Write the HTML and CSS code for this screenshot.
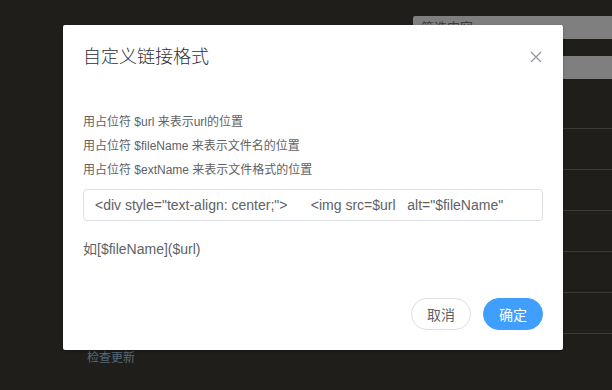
FILE: index.html
```html
<!DOCTYPE html>
<html lang="zh-CN">
<head>
    <meta charset="UTF-8">
    <meta name="viewport" content="width=device-width, initial-scale=1.0">
    <title>自定义链接格式</title>
    <link rel="stylesheet" href="styles.css">
</head>
<body>

    <!-- Page behind the dialog (dimmed) -->
    <div class="page">
        <div class="filters">
            <div class="filter-bar">筛选内容</div>
            <div class="filter-bar"></div>
        </div>
        <div class="rows">
            <div class="row"></div>
            <div class="row"></div>
            <div class="row"></div>
            <div class="row"></div>
            <div class="row"></div>
            <div class="row"></div>
        </div>
        <a href="#" class="update-link">检查更新</a>
    </div>

    <!-- Dialog -->
    <div class="dialog-wrapper">
        <div class="dialog">
            <div class="dialog-header">
                <span class="dialog-title">自定义链接格式</span>
                <button class="dialog-close" aria-label="Close">
                    <svg width="12" height="12" viewBox="0 0 12 12">
                        <path d="M1 1 L11 11 M11 1 L1 11" stroke="#909399" stroke-width="1.2" fill="none"/>
                    </svg>
                </button>
            </div>
            <div class="dialog-body">
                <div class="tip">用占位符 $url 来表示url的位置</div>
                <div class="tip">用占位符 $fileName 来表示文件名的位置</div>
                <div class="tip">用占位符 $extName 来表示文件格式的位置</div>
                <input class="format-input" type="text" value='<div style="text-align: center;">      <img src=$url   alt="$fileName"      style="width: 100%;">  </div>'>
                <div class="example">如[$fileName]($url)</div>
            </div>
            <div class="dialog-footer">
                <button class="btn">取消</button>
                <button class="btn btn-primary">确定</button>
            </div>
        </div>
    </div>

</body>
</html>
```

FILE: styles.css
```css
/* General Styles */
body {
    margin: 0;
    padding: 0;
    background-color: #1f1e1a;
    font-family: "Liberation Sans", Arial, "Noto Sans CJK SC", sans-serif;
    width: 612px;
    height: 390px;
    overflow: hidden;
}

/* Page behind the overlay */
.page {
    position: relative;
    height: 390px;
}

.filters {
    padding: 16px 0 0 413px;
    display: flex;
    flex-direction: column;
    gap: 17px;
}

.filter-bar {
    height: 23px;
    background-color: #7f7f7f;
    border-radius: 2px 0 0 2px;
    color: #3c3c3c;
    font-size: 13px;
    line-height: 23px;
    padding-left: 8px;
    box-sizing: border-box;
}

.rows {
    margin-top: 49px;
    padding-left: 87px;
}

.row {
    height: 41px;
    border-bottom: 1px solid #3b3a36;
    box-sizing: border-box;
}

.rows .row:first-child {
    height: 0;
}

.update-link {
    display: block;
    margin: 14px 0 0 87px;
    color: #56697a;
    font-size: 12px;
    text-decoration: none;
}

/* Dialog */
.dialog-wrapper {
    position: absolute;
    top: 25px;
    left: 63px;
}

.dialog {
    width: 500px;
    background-color: #fff;
    border-radius: 2px;
    box-shadow: 0 1px 3px rgba(0, 0, 0, 0.3);
}

.dialog-header {
    padding: 20px 20px 10px;
    display: flex;
    justify-content: space-between;
    align-items: center;
}

.dialog-title {
    font-size: 18px;
    line-height: 24px;
    font-weight: 300;
    color: #303133;
}

.dialog-close {
    border: none;
    background: none;
    padding: 0;
    margin-right: 1px;
    width: 12px;
    height: 12px;
    display: flex;
    cursor: pointer;
}

.dialog-body {
    padding: 31px 20px 30px;
    color: #606266;
}

.tip {
    font-size: 12px;
    line-height: 24px;
}

.format-input {
    display: block;
    width: 100%;
    box-sizing: border-box;
    height: 32px;
    margin-top: 7px;
    padding: 0 15px 0 11px;
    border: 1px solid #dcdfe6;
    border-radius: 4px;
    font-family: inherit;
    font-size: 14px;
    color: #606266;
    outline: none;
}

.example {
    margin-top: 18px;
    font-size: 14px;
    line-height: 21px;
}

.dialog-footer {
    padding: 8px 20px 20px;
    display: flex;
    justify-content: flex-end;
    gap: 12px;
}

.btn {
    height: 32px;
    width: 60px;
    border: 1px solid #dcdfe6;
    border-radius: 20px;
    background-color: #fff;
    color: #606266;
    font-family: inherit;
    font-size: 14px;
    padding: 0;
    cursor: pointer;
}

.btn-primary {
    background-color: #409eff;
    border-color: #409eff;
    color: #fff;
}
```
